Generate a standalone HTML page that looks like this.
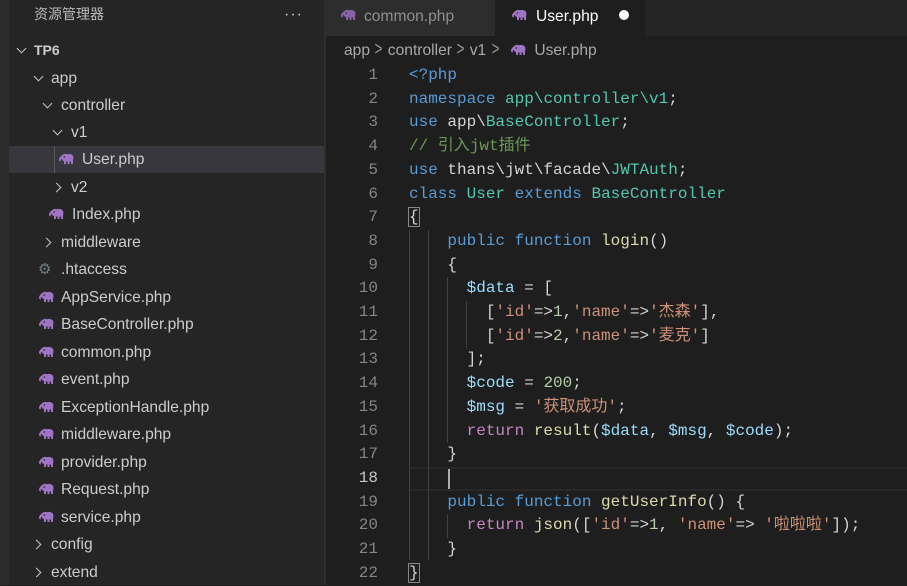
<!DOCTYPE html>
<html><head><meta charset="utf-8"><style>
*{margin:0;padding:0;box-sizing:border-box}
body{width:907px;height:585px;overflow:hidden;background:#1e1e1e;position:relative;font-family:"Liberation Sans","Noto Sans CJK SC",sans-serif}
.act{position:absolute;left:0;top:0;width:9px;height:585px;background:#2c2c2c}
.side{position:absolute;left:9px;top:0;width:315px;height:585px;background:#252526;color:#cccccc;font-size:15.6px}
.sb{position:absolute;left:324px;top:0;width:2px;height:585px;background:#2e2e2e}
.row{position:absolute;left:0;width:315px;height:27px;line-height:27px;white-space:nowrap}
.row span{position:absolute}
.chev{position:absolute;width:7px;height:7px;border-right:1.3px solid #c5c5c5;border-bottom:1.3px solid #c5c5c5}
.dn{transform:rotate(45deg)}
.rt{transform:rotate(-45deg)}
.ele{position:absolute;top:7px}
.tabs{position:absolute;left:326px;top:0;width:581px;height:36px;background:#252526}
.tab{position:absolute;top:0;height:36px;line-height:34px;font-size:15.6px}
.bc{position:absolute;left:344px;top:38px;font-size:15.6px;color:#a9a9a9;line-height:24px;white-space:nowrap}
.bc b{font-weight:normal;font-size:19px;color:#999;display:inline-block;transform:scaleX(.7);margin:0 -1px}
.code{position:absolute;left:0;top:0;font-family:"Liberation Mono","Noto Sans CJK SC",monospace;font-size:16px}
.ln{position:absolute;left:330px;width:48px;text-align:right;color:#858585;height:24px;line-height:24px}
.cl{position:absolute;left:409px;height:24px;line-height:24px;white-space:pre;color:#d4d4d4}
.k{color:#569cd6}.c{color:#c586c0}.f{color:#dcdcaa}.v{color:#9cdcfe}.s{color:#ce9178}.n{color:#b5cea8}.t{color:#4ec9b0}.m{color:#6a9955}
.g{position:absolute;width:1px;background:#404040}
</style></head><body>
<svg width="0" height="0" style="position:absolute"><defs><symbol id="el" viewBox="0 0 16 12"><path d="M5 1.5C6 0.5 8 0.8 9 1.2 10.5 0.6 13 0.8 14.5 2.2 15.8 3.5 15.5 6 15 7.5L15 11H13V8.5H11.5V11H9.5V8.5H8V11H6V8C4.5 8 4 7 4 5.8 3.2 6.2 2.5 7.2 2.8 8.5 1.5 8.5 0.8 7.5 1 6.3 1.3 4.5 2.8 3 5 1.5Z" fill="currentColor"/><circle cx="6.3" cy="4" r=".8" fill="#252526"/></symbol></defs></svg>
<div class="act"></div>
<div class="side">
 <div style="position:absolute;left:25px;top:4px;font-size:14px;color:#bbbbbb">资源管理器</div>
 <div style="position:absolute;left:275px;top:6px;font-size:16px;color:#ccc;letter-spacing:1px">···</div>
 <div class="row" style="top:37px"><i class="chev dn" style="left:9px;top:8px"></i><span style="left:25px;font-weight:bold;font-size:14px">TP6</span></div>
 <div class="row" style="top:65px"><i class="chev dn" style="left:26px;top:8px"></i><span style="left:42px">app</span></div>
 <div class="row" style="top:92px"><i class="chev dn" style="left:35px;top:8px"></i><span style="left:52px">controller</span></div>
 <div class="row" style="top:119px"><i class="chev dn" style="left:45px;top:8px"></i><span style="left:62px">v1</span></div>
 <div class="row" style="top:146px;background:#37373d"><i style="position:absolute;left:45px;top:0;width:1px;height:27px;background:#585858"></i><svg class="ele" style="left:49px;color:#a074c4" width="16" height="12"><use href="#el"/></svg><span style="left:73px">User.php</span></div>
 <div class="row" style="top:174px"><i class="chev rt" style="left:44px;top:10px"></i><span style="left:62px">v2</span></div>
 <div class="row" style="top:201px"><svg class="ele" style="left:39px;color:#a074c4" width="16" height="12"><use href="#el"/></svg><span style="left:63px">Index.php</span></div>
 <div class="row" style="top:229px"><i class="chev rt" style="left:34px;top:10px"></i><span style="left:52px">middleware</span></div>
 <div class="row" style="top:256px"><span style="left:29px;color:#6d8086;font-size:15px">⚙</span><span style="left:52px">.htaccess</span></div>
 <div class="row" style="top:284px"><svg class="ele" style="left:29px;color:#a074c4" width="16" height="12"><use href="#el"/></svg><span style="left:52px">AppService.php</span></div>
 <div class="row" style="top:311px"><svg class="ele" style="left:29px;color:#a074c4" width="16" height="12"><use href="#el"/></svg><span style="left:52px">BaseController.php</span></div>
 <div class="row" style="top:339px"><svg class="ele" style="left:29px;color:#a074c4" width="16" height="12"><use href="#el"/></svg><span style="left:52px">common.php</span></div>
 <div class="row" style="top:366px"><svg class="ele" style="left:29px;color:#a074c4" width="16" height="12"><use href="#el"/></svg><span style="left:52px">event.php</span></div>
 <div class="row" style="top:394px"><svg class="ele" style="left:29px;color:#a074c4" width="16" height="12"><use href="#el"/></svg><span style="left:52px">ExceptionHandle.php</span></div>
 <div class="row" style="top:421px"><svg class="ele" style="left:29px;color:#a074c4" width="16" height="12"><use href="#el"/></svg><span style="left:52px">middleware.php</span></div>
 <div class="row" style="top:449px"><svg class="ele" style="left:29px;color:#a074c4" width="16" height="12"><use href="#el"/></svg><span style="left:52px">provider.php</span></div>
 <div class="row" style="top:476px"><svg class="ele" style="left:29px;color:#a074c4" width="16" height="12"><use href="#el"/></svg><span style="left:52px">Request.php</span></div>
 <div class="row" style="top:504px"><svg class="ele" style="left:29px;color:#a074c4" width="16" height="12"><use href="#el"/></svg><span style="left:52px">service.php</span></div>
 <div class="row" style="top:531px"><i class="chev rt" style="left:24px;top:10px"></i><span style="left:42px">config</span></div>
 <div class="row" style="top:559px"><i class="chev rt" style="left:24px;top:10px"></i><span style="left:42px">extend</span></div>
</div>
<div class="sb"></div>
<div class="tabs">
 <div class="tab" style="left:0;width:169px;background:#2d2d2d;color:#8f8f8f"><svg style="position:absolute;left:14px;top:9px;color:#8a62a8" width="16" height="12"><use href="#el"/></svg><span style="position:absolute;left:38px">common.php</span></div>
 <div class="tab" style="left:169px;width:150px;background:#1e1e1e;color:#ffffff"><svg style="position:absolute;left:16px;top:9px;color:#a074c4" width="16" height="12"><use href="#el"/></svg><span style="position:absolute;left:41px">User.php</span><i style="position:absolute;left:124px;top:10px;width:10px;height:10px;border-radius:50%;background:#fff"></i></div>
</div>
<div class="bc">app <b>&gt;</b> controller <b>&gt;</b> v1 <b>&gt;</b> <svg style="vertical-align:-1px;margin:0 4px 0 6px;color:#a074c4" width="16" height="12"><use href="#el"/></svg> User.php</div>
<div class="code">
 <div style="position:absolute;left:409px;top:467px;width:498px;height:24px;border-top:2px solid #282828;border-bottom:2px solid #282828"></div>
 <div class="g" style="left:409px;top:230px;height:330px"></div>
 <div class="g" style="left:428px;top:230px;height:330px"></div>
 <div class="g" style="left:447px;top:277px;height:166px"></div>
 <div class="g" style="left:447px;top:514px;height:24px"></div>
 <div class="g" style="left:466px;top:301px;height:47px"></div>
 <div style="position:absolute;left:448px;top:469px;width:2px;height:20px;background:#aeafad"></div>
 <div class="ln" style="top:63px">1</div><div class="cl" style="top:63px"><span class="k">&lt;?php</span></div>
 <div class="ln" style="top:87px">2</div><div class="cl" style="top:87px"><span class="k">namespace</span> <span class="t">app\controller\v1</span>;</div>
 <div class="ln" style="top:110px">3</div><div class="cl" style="top:110px"><span class="k">use</span> app\<span class="t">BaseController</span>;</div>
 <div class="ln" style="top:134px">4</div><div class="cl m" style="top:134px">// 引入jwt插件</div>
 <div class="ln" style="top:158px">5</div><div class="cl" style="top:158px"><span class="k">use</span> thans\jwt\facade\<span class="t">JWTAuth</span>;</div>
 <div class="ln" style="top:182px">6</div><div class="cl" style="top:182px"><span class="k">class</span> <span class="t">User</span> <span class="k">extends</span> <span class="t">BaseController</span></div>
 <div class="ln" style="top:205px">7</div><div class="cl" style="top:205px"><span style="outline:1px solid #888">{</span></div>
 <div class="ln" style="top:229px">8</div><div class="cl" style="top:229px">    <span class="k">public</span> <span class="k">function</span> <span class="f">login</span>()</div>
 <div class="ln" style="top:253px">9</div><div class="cl" style="top:253px">    {</div>
 <div class="ln" style="top:276px">10</div><div class="cl" style="top:276px">      <span class="v">$data</span> = [</div>
 <div class="ln" style="top:300px">11</div><div class="cl" style="top:300px">        [<span class="s">'id'</span>=&gt;<span class="n">1</span>,<span class="s">'name'</span>=&gt;<span class="s">'杰森'</span>],</div>
 <div class="ln" style="top:324px">12</div><div class="cl" style="top:324px">        [<span class="s">'id'</span>=&gt;<span class="n">2</span>,<span class="s">'name'</span>=&gt;<span class="s">'麦克'</span>]</div>
 <div class="ln" style="top:347px">13</div><div class="cl" style="top:347px">      ];</div>
 <div class="ln" style="top:371px">14</div><div class="cl" style="top:371px">      <span class="v">$code</span> = <span class="n">200</span>;</div>
 <div class="ln" style="top:395px">15</div><div class="cl" style="top:395px">      <span class="v">$msg</span> = <span class="s">'获取成功'</span>;</div>
 <div class="ln" style="top:419px">16</div><div class="cl" style="top:419px">      <span class="c">return</span> <span class="f">result</span>(<span class="v">$data</span>, <span class="v">$msg</span>, <span class="v">$code</span>);</div>
 <div class="ln" style="top:442px">17</div><div class="cl" style="top:442px">    }</div>
 <div class="ln" style="top:466px;color:#c6c6c6">18</div>
 <div class="ln" style="top:490px">19</div><div class="cl" style="top:490px">    <span class="k">public</span> <span class="k">function</span> <span class="f">getUserInfo</span>() {</div>
 <div class="ln" style="top:513px">20</div><div class="cl" style="top:513px">      <span class="c">return</span> <span class="f">json</span>([<span class="s">'id'</span>=&gt;<span class="n">1</span>, <span class="s">'name'</span>=&gt; <span class="s">'啦啦啦'</span>]);</div>
 <div class="ln" style="top:537px">21</div><div class="cl" style="top:537px">    }</div>
 <div class="ln" style="top:561px">22</div><div class="cl" style="top:561px"><span style="outline:1px solid #888">}</span></div>
</div>
</body></html>
